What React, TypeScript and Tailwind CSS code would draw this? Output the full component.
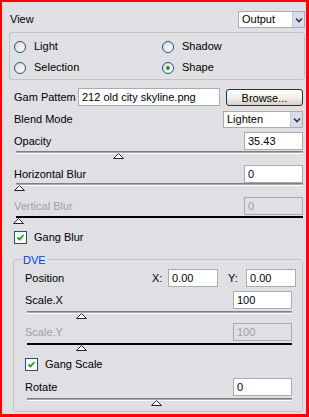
import type { ReactNode } from 'react';

function Field({ value, width, disabled }: { value: string; width: string; disabled?: boolean }) {
  return (
    <div
      className={`${width} flex h-[18px] items-center border px-[3px] text-[11px] ${
        disabled ? 'border-[#a9a9a9] bg-[#e0dfe3] text-[#a0a0a0]' : 'border-[#a5acb2] bg-white text-black'
      }`}
    >
      {value}
    </div>
  );
}

function Combo({ value, width }: { value: string; width: string }) {
  return (
    <div className={`${width} flex h-[17px] items-stretch border border-[#a5acb2] bg-white`}>
      <span className="flex flex-1 items-center px-[3px] text-[11px] text-black">{value}</span>
      <span className="flex w-[12px] items-center justify-center border-l border-[#c3c9d8] bg-[#d9dde9]">
        <svg width="8" height="6" viewBox="0 0 8 6">
          <path d="M1 1.5 L4 4.5 L7 1.5" fill="none" stroke="#2b3553" strokeWidth="1.6" />
        </svg>
      </span>
    </div>
  );
}

function Slider({ thumb, dark, className }: { thumb: string; dark?: boolean; className: string }) {
  return (
    <div className={`relative h-[10px] ${className}`}>
      {dark ? (
        <div className="h-[2px] bg-black" />
      ) : (
        <div className="h-[3px] border-t border-[#7f7f7f] border-b border-b-white bg-[#a9a9a9]" />
      )}
      <svg className={`absolute top-[2px] ${thumb}`} width="11" height="6" viewBox="0 0 11 6">
        <polygon points="0.5,5.5 5.5,0.5 10.5,5.5" fill="white" stroke="#222" strokeWidth="1" />
      </svg>
    </div>
  );
}

function Radio({ checked, label }: { checked?: boolean; label: string }) {
  return (
    <div className="flex h-[13px] items-center gap-[8px]">
      <span className="flex h-[12px] w-[12px] items-center justify-center rounded-full border border-[#1c5180] bg-gradient-to-br from-[#dcdcd7] to-white">
        {checked && <span className="h-[4px] w-[4px] rounded-full bg-[#21a121]" />}
      </span>
      <span className="text-[11px] text-black">{label}</span>
    </div>
  );
}

function Check({ label }: { label: string }) {
  return (
    <div className="flex h-[13px] items-center gap-[7px]">
      <span className="flex h-[13px] w-[13px] items-center justify-center border border-[#1c5180] bg-white">
        <svg width="9" height="9" viewBox="0 0 9 9">
          <path d="M1.5 4.5 L3.5 6.5 L7.5 2" fill="none" stroke="#21a121" strokeWidth="1.8" />
        </svg>
      </span>
      <span className="text-[11px] text-black">{label}</span>
    </div>
  );
}

function Row({ label, children, className, disabled }: { label: string; children: ReactNode; className: string; disabled?: boolean }) {
  return (
    <div className={`flex items-center justify-between ${className}`}>
      <span className={`text-[11px] ${disabled ? 'text-[#a0a0a0]' : 'text-black'}`}>{label}</span>
      {children}
    </div>
  );
}

export default function App() {
  return (
    <div className="h-[417px] w-[309px] overflow-hidden border-b-[3px] border-l-2 border-r-[3px] border-t-2 border-[#ff0000] bg-[#e0dfe3] font-['Liberation_Sans',Arial,sans-serif]">
      <div className="flex flex-col pl-[7px] pr-[1px] pt-[9px]">
        <Row label="View" className="h-[17px] pl-[1px]">
          <Combo value="Output" width="w-[67px]" />
        </Row>

        <div className="mt-[4px] grid h-[48px] grid-cols-[148px_1fr] content-start gap-y-[8px] rounded-[3px] border border-[#c4c4bc] pl-[4px] pt-[7px]">
          <Radio label="Light" />
          <Radio label="Shadow" />
          <Radio label="Selection" />
          <Radio label="Shape" checked />
        </div>

        <div className="mt-[8px] flex h-[18px] items-center pl-[5px] pr-[2px]">
          <span className="w-[64px] text-[11px] text-black">Gam Pattem</span>
          <Field value="212 old city skyline.png" width="w-[142px]" />
          <button className="ml-[6px] h-[17px] w-[77px] rounded-[3px] border border-[#003c74] bg-gradient-to-b from-white via-[#f1f0ea] to-[#d8d2c6] text-[11px] text-black">
            Browse...
          </button>
        </div>

        <Row label="Blend Mode" className="mt-[5px] h-[17px] pl-[5px] pr-[2px]">
          <Combo value="Lighten" width="w-[80px]" />
        </Row>

        <Row label="Opacity" className="mt-[4px] h-[18px] pl-[5px] pr-[2px]">
          <Field value="35.43" width="w-[59px]" />
        </Row>
        <Slider thumb="left-[97px]" className="ml-[7px] mr-[2px] mt-[1px]" />

        <Row label="Horizontal Blur" className="mt-[4px] h-[18px] pl-[5px] pr-[2px]">
          <Field value="0" width="w-[59px]" />
        </Row>
        <Slider thumb="left-[-2px]" className="ml-[7px] mr-[2px]" />

        <Row label="Vertical Blur" disabled className="mt-[4px] h-[18px] pl-[5px] pr-[2px]">
          <Field value="0" width="w-[59px]" disabled />
        </Row>
        <Slider thumb="left-[-3px]" dark className="ml-[7px] mr-[2px] mt-[1px]" />

        <div className="mt-[5px] pl-[5px]">
          <Check label="Gang Blur" />
        </div>

        <div className="relative ml-[4px] mr-[2px] mt-[15px] h-[153px] rounded-[3px] border border-[#c4c4bc] pl-[11px] pr-[10px] pt-[9px]">
          <span className="absolute left-[8px] top-[-8px] bg-[#e0dfe3] px-[1px] text-[11px] text-[#0046d5]">DVE</span>

          <div className="flex h-[18px] items-center mr-[-4px]">
            <span className="flex-1 text-[11px] text-black">Position</span>
            <span className="w-[16px] text-[11px] text-black">X:</span>
            <Field value="0.00" width="w-[50px]" />
            <span className="ml-[10px] w-[18px] text-[11px] text-black">Y:</span>
            <Field value="0.00" width="w-[50px]" />
          </div>

          <Row label="Scale.X" className="mt-[4px] h-[18px]">
            <Field value="100" width="w-[59px]" />
          </Row>
          <Slider thumb="left-[49px]" className="ml-[2px] mt-[2px]" />

          <Row label="Scale.Y" disabled className="mt-[2px] h-[18px]">
            <Field value="100" width="w-[59px]" disabled />
          </Row>
          <Slider thumb="left-[49px]" dark className="ml-[2px] mt-[2px]" />

          <div className="mt-[5px]">
            <Check label="Gang Scale" />
          </div>

          <Row label="Rotate" className="mt-[7px] h-[18px]">
            <Field value="0" width="w-[59px]" />
          </Row>
          <Slider thumb="left-[124px]" className="ml-[2px] mt-[2px]" />
        </div>
      </div>
    </div>
  );
}
